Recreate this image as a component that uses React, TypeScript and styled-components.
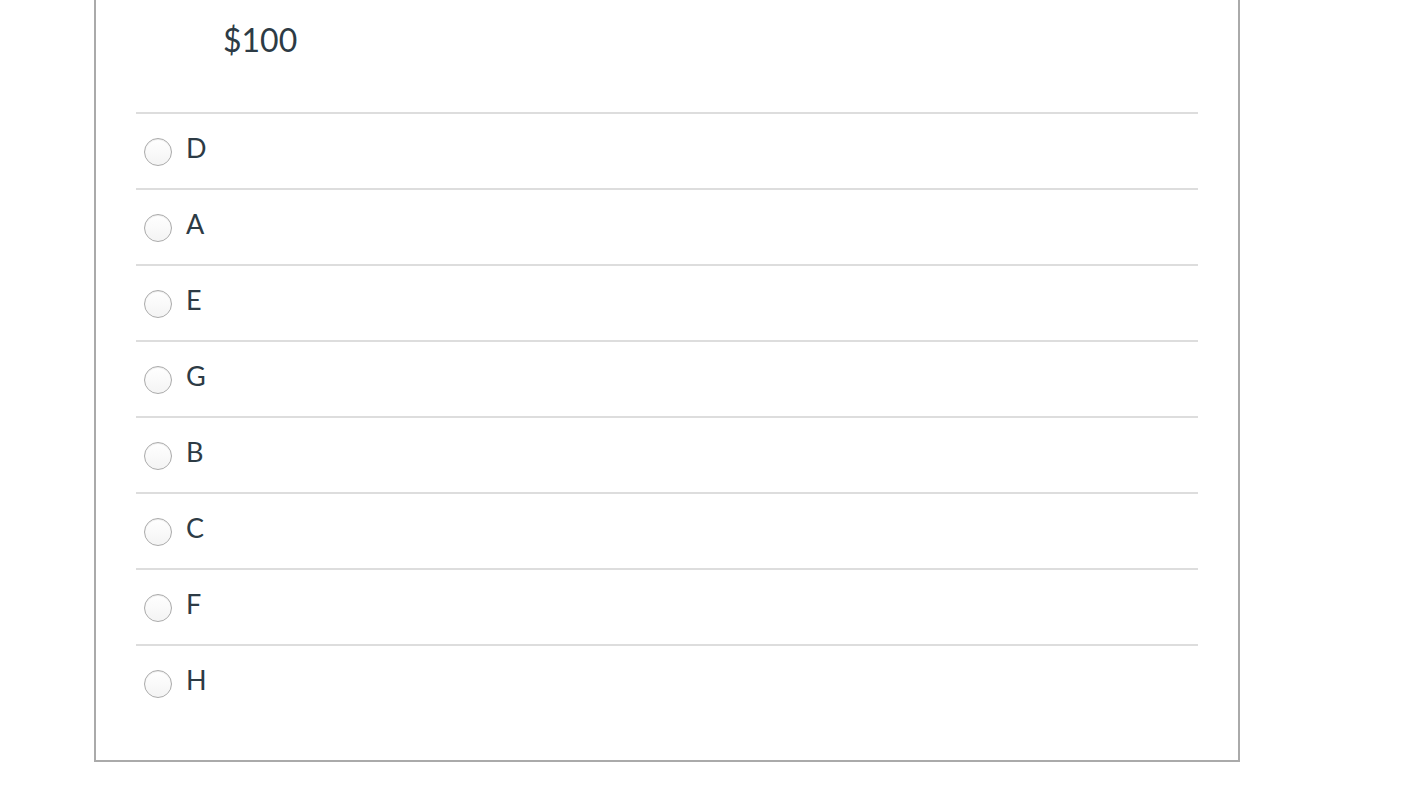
import styled, { createGlobalStyle } from "styled-components";

const GlobalStyle = createGlobalStyle`
  body {
    margin: 0;
    background: #ffffff;
    font-family: Lato, "Liberation Sans", sans-serif;
    color: #2d3b45;
  }
`;

const Page = styled.div`
  padding: 0 0 46px 94px;
`;

const QuestionBox = styled.div`
  width: 1146px;
  box-sizing: border-box;
  border: 2px solid #aaaaaa;
  border-top: none;
  padding: 0 40px 40px 40px;
`;

const Prompt = styled.div`
  font-size: 32px;
  line-height: 38.4px;
  padding: 21px 0 53px 87px;
`;

const AnswerList = styled.div`
  display: flex;
  flex-direction: column;
`;

const AnswerRow = styled.label`
  display: flex;
  align-items: center;
  gap: 14px;
  height: 74px;
  padding-left: 8px;
  border-top: 2px solid #dddddd;
  cursor: pointer;
`;

const Radio = styled.span`
  width: 28px;
  height: 28px;
  box-sizing: border-box;
  border-radius: 50%;
  border: 1.5px solid #ababab;
  background: linear-gradient(#ffffff, #f4f4f4);
  box-shadow: inset 0 1px 1px rgba(0, 0, 0, 0.08);
  margin-top: 2px;
  flex-shrink: 0;
`;

const AnswerText = styled.span`
  font-size: 27px;
  line-height: 32.4px;
  margin-bottom: 6px;
`;

const answers = ["D", "A", "E", "G", "B", "C", "F", "H"];

export default function App() {
  return (
    <>
      <GlobalStyle />
      <Page>
        <QuestionBox>
          <Prompt>$100</Prompt>
          <AnswerList>
            {answers.map((a) => (
              <AnswerRow key={a}>
                <Radio />
                <AnswerText>{a}</AnswerText>
              </AnswerRow>
            ))}
          </AnswerList>
        </QuestionBox>
      </Page>
    </>
  );
}
